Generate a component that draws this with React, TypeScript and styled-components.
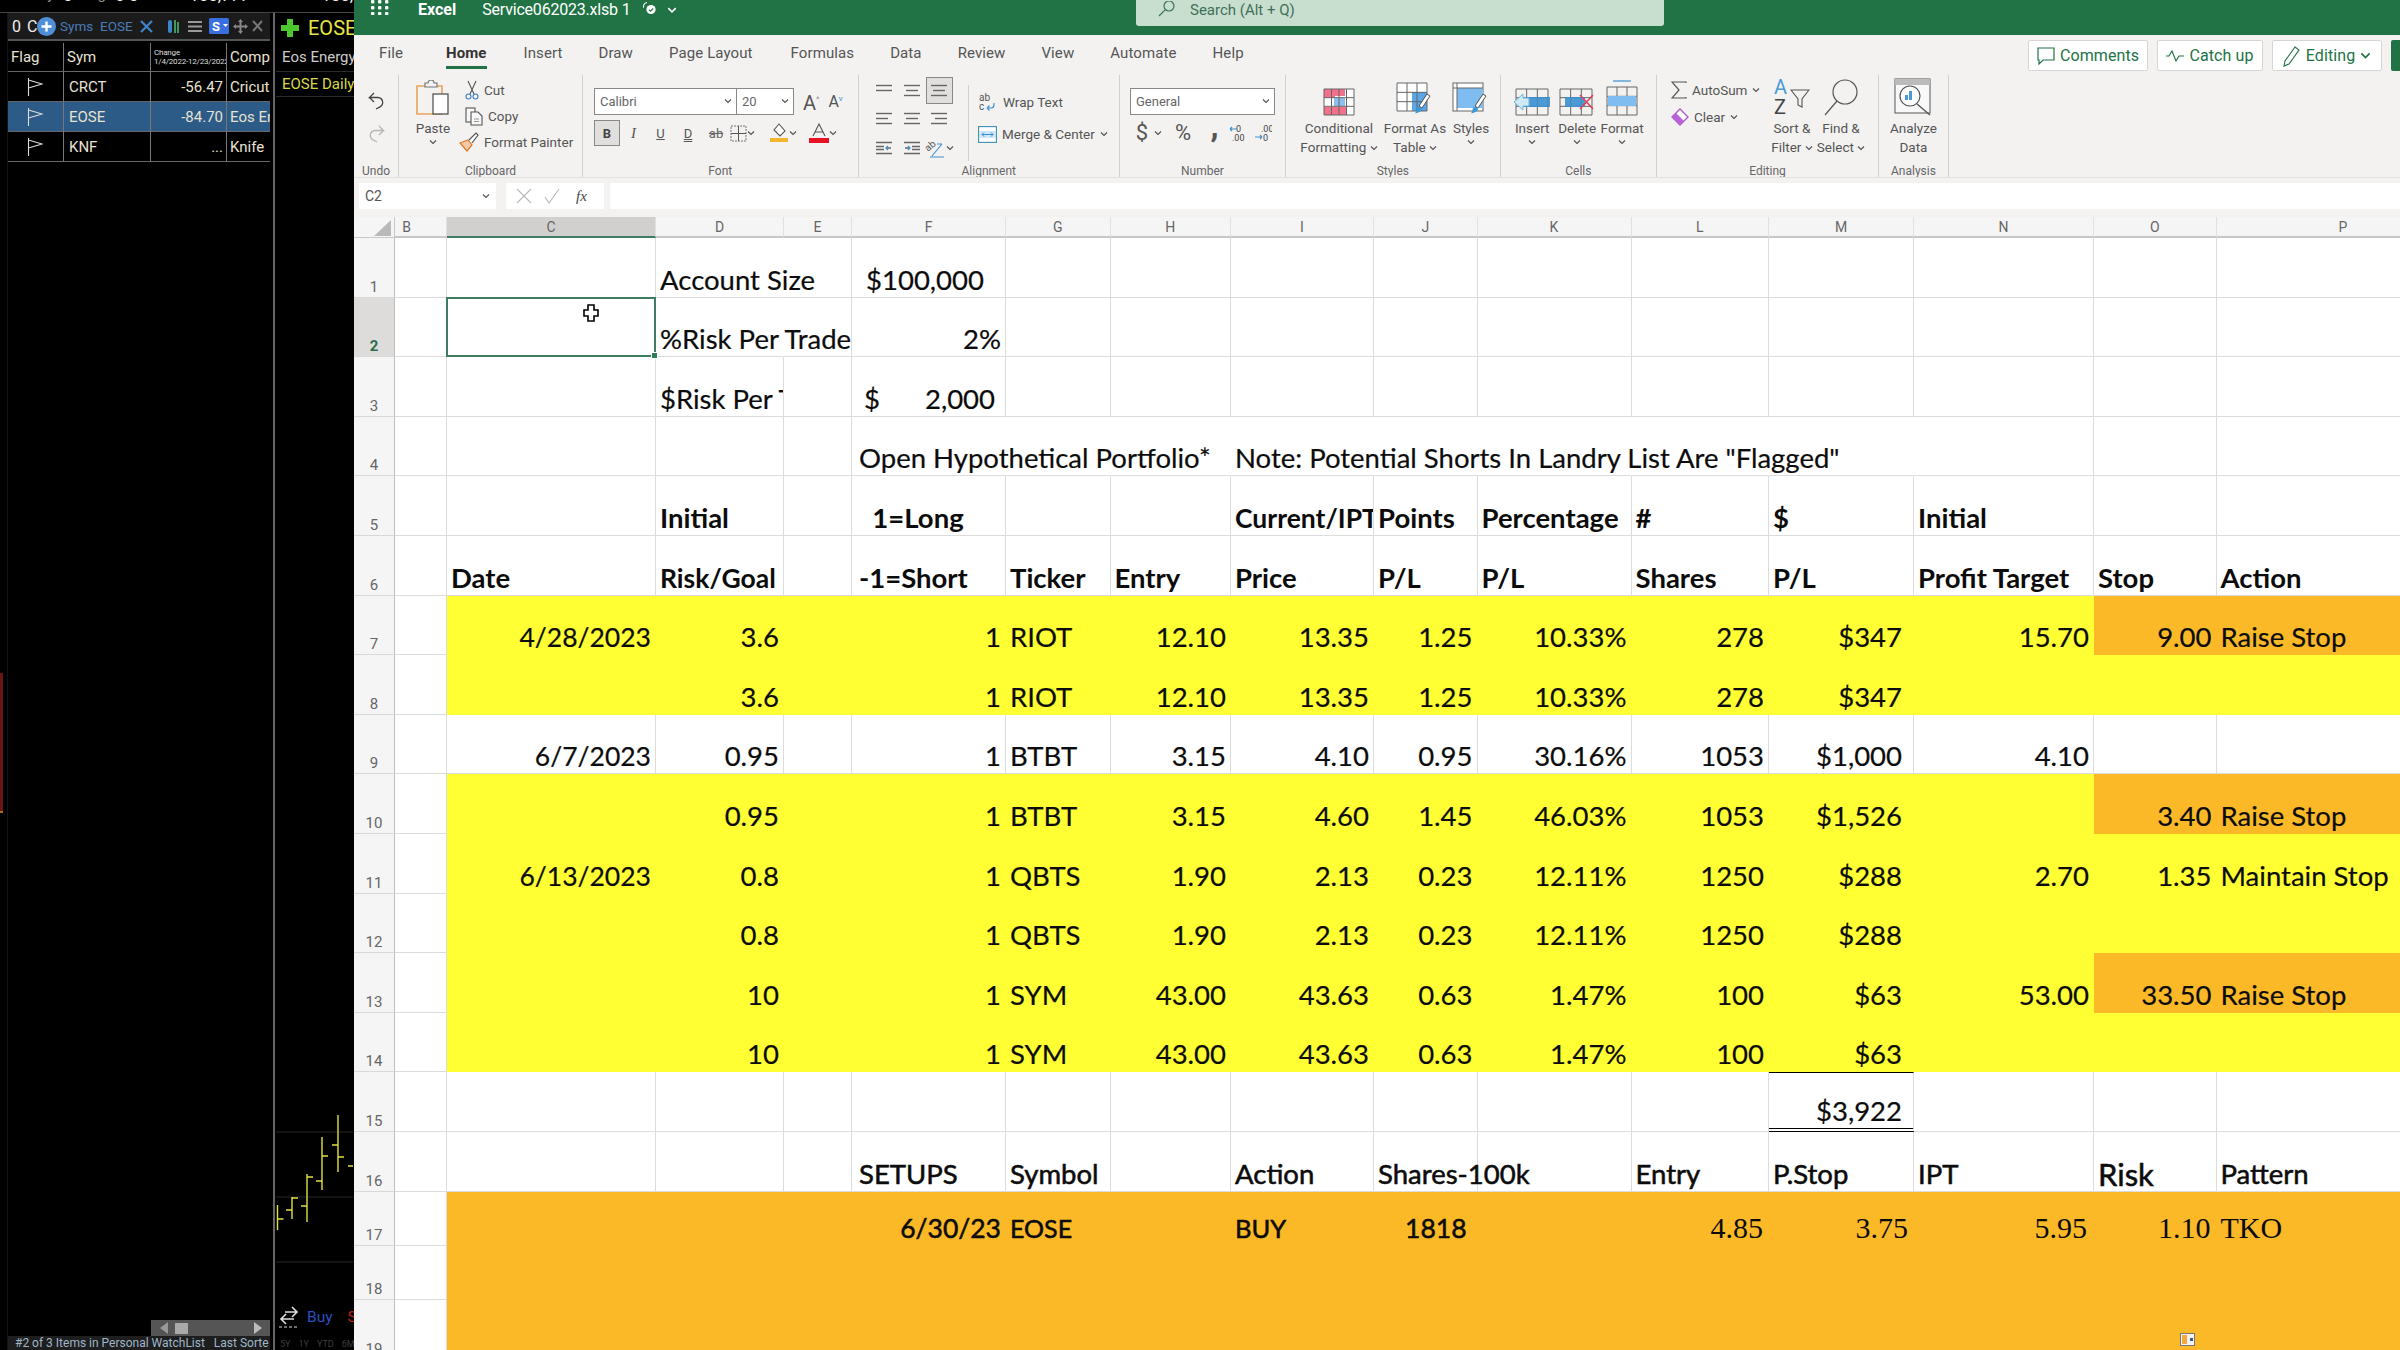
import React from "react";
import styled, { createGlobalStyle } from "styled-components";

const UI = `"Roboto", "Liberation Sans", sans-serif`;
const SHEET = `"Lato", "Liberation Sans", sans-serif`;
const GREEN = "#217346";
const YELLOW = "#ffff33";
const ORANGE = "#fbb827";

const Global = createGlobalStyle`
  html, body { margin: 0; padding: 0; background: #000; }
  * { box-sizing: border-box; }
  svg { flex: none; }
`;

const Page = styled.div`
  display: flex;
  width: 2400px;
  height: 1350px;
  overflow: hidden;
  font-family: ${UI};
`;
const Gap = styled.span<{ $w: number }>`
  width: ${({ $w }) => $w}px;
  flex: none;
`;

/* ---------- trading platform on the left ---------- */

const Platform = styled.div`
  display: flex;
  flex-direction: column;
  width: 354px;
  flex: none;
  background: #000;
  color: #ddd;
  overflow: hidden;
`;
const StatusStrip = styled.div`
  display: flex;
  align-items: flex-end;
  gap: 9px;
  height: 13px;
  padding: 0 0 7px 15px;
  overflow: hidden;
  border-bottom: 1px solid #444;
  font-size: 14.5px;
  line-height: 20px;
  white-space: nowrap;
  color: #999;
  b { color: #eee; font-weight: 400; font-size: 17px; }
`;
const PlatformBody = styled.div`
  display: flex;
  flex: 1;
  min-height: 0;
`;
const EdgeStrip = styled.div`
  width: 8px;
  flex: none;
  padding-top: 660px;
  border-right: 1px solid #10131c;
`;
const EdgeMark = styled.div`
  width: 3px;
  height: 140px;
  background: #6b1414;
  border-bottom: 2px solid #a8701a;
`;
const WatchPane = styled.div`
  display: flex;
  flex-direction: column;
  width: 262px;
  flex: none;
`;
const WatchToolbar = styled.div`
  display: flex;
  align-items: center;
  height: 28px;
  padding-left: 4px;
  background: #1b1b1b;
  font-size: 16px;
  border-bottom: 2px solid #555;
  white-space: nowrap;
`;
const Zeroes = styled.span`
  color: #eee;
  letter-spacing: 1px;
  width: 25px;
`;
const SymsLabel = styled.span<{ $w: number; $ml?: number }>`
  color: #4a7cb8;
  font-size: 13.5px;
  width: ${({ $w }) => $w}px;
  margin-left: ${({ $ml }) => $ml ?? 0}px;
`;
const ToolSvg = styled.svg<{ $mr?: number }>`
  margin-right: ${({ $mr }) => $mr ?? 0}px;
`;
const WatchGrid = styled.div`
  display: grid;
  grid-template-columns: 56px 87px 76px 43px;
  grid-template-rows: 29px 30px 30px 30px;
  margin-top: 2px;
`;
const WatchCell = styled.div<{ $right?: boolean; $sel?: boolean; $last?: boolean; $indent?: number }>`
  display: flex;
  align-items: center;
  justify-content: ${({ $right }) => ($right ? "flex-end" : "flex-start")};
  padding: 0 3px 0 ${({ $indent }) => $indent ?? 3}px;
  overflow: hidden;
  white-space: nowrap;
  font-size: 15px;
  color: #e8e2d2;
  background: ${({ $sel }) => ($sel ? "#2b5b86" : "transparent")};
  border-bottom: 1px solid #666;
  border-right: ${({ $last }) => ($last ? "none" : "1px solid #777")};
`;
const ChangeHead = styled.div`
  font-size: 8px;
  line-height: 9px;
  color: #ddd;
  letter-spacing: -0.2px;
`;
const Spacer = styled.div`
  flex: 1;
`;
const HScroll = styled.div`
  display: flex;
  align-items: center;
  justify-content: space-between;
  width: 119px;
  height: 16px;
  margin-left: 143px;
  padding: 0 8px 0 9px;
  background: #555;
`;
const ScrollThumb = styled.div`
  width: 13px;
  height: 11px;
  margin-right: 60px;
  background: #aaa;
`;
const WatchStatus = styled.div`
  height: 14px;
  padding-left: 7px;
  background: #1e1e1e;
  color: #9fb6c9;
  font-size: 12px;
  line-height: 15px;
  white-space: nowrap;
  overflow: hidden;
`;
const PaneDivider = styled.div`
  width: 2px;
  margin-left: 3px;
  flex: none;
  background: #666;
`;
const ChartPane = styled.div`
  display: flex;
  flex-direction: column;
  flex: 1;
  min-width: 0;
  overflow: hidden;
  margin-left: 1px;
  white-space: nowrap;
`;
const ChartHead = styled.div`
  display: flex;
  align-items: center;
  gap: 9px;
  height: 30px;
  padding-left: 5px;
  color: #e6e645;
  font-size: 20px;
`;
const ChartInfo = styled.div<{ $tone: string; $h: number }>`
  height: ${({ $h }) => $h}px;
  padding-left: 6px;
  color: ${({ $tone }) => $tone};
  font-size: 15px;
  line-height: ${({ $h }) => $h}px;
  border-bottom: 1px solid #2c2c2c;
`;
const ChartSvg = styled.svg`
  display: block;
`;
const TradeRow = styled.div`
  display: flex;
  align-items: center;
  gap: 8px;
  height: 26px;
  margin-top: 39px;
  padding-left: 3px;
  font-size: 15.5px;
`;
const BuyText = styled.span`
  color: #2a50c0;
`;
const SellText = styled.span`
  color: #c0201c;
  margin-left: 7px;
`;
const RangeRow = styled.div`
  display: flex;
  gap: 8px;
  height: 20px;
  padding: 7px 0 0 4px;
  color: #3c3c3c;
  font-size: 9px;
  line-height: 14px;
`;

/* ---------- excel ---------- */

const Excel = styled.div`
  display: flex;
  flex-direction: column;
  flex: 1;
  min-width: 0;
  background: #fff;
`;
const TitleBar = styled.div`
  display: flex;
  height: 35px;
  padding-left: 17px;
  background: ${GREEN};
  color: #fff;
  flex: none;
`;
const TitleLeft = styled.div`
  display: flex;
  align-items: flex-start;
  width: 765px;
  flex: none;
  font-size: 16px;
  line-height: 20px;
`;
const AppName = styled.span`
  font-weight: 700;
  margin-left: 29px;
`;
const FileName = styled.span`
  margin-left: 26px;
  margin-right: 11px;
  letter-spacing: -0.2px;
`;
const TitleChev = styled.span`
  margin-left: 9px;
`;
const SearchBox = styled.div`
  display: flex;
  align-items: flex-start;
  gap: 13px;
  width: 528px;
  height: 26px;
  padding: 1px 0 0 21px;
  background: #c8dfcf;
  border-radius: 0 0 3px 3px;
  color: #3f6f57;
  font-size: 15px;
  line-height: 18px;
`;
const TabBar = styled.div`
  display: flex;
  align-items: flex-start;
  height: 40px;
  padding: 9px 18px 0 25px;
  background: #f3f2f1;
  font-size: 15px;
  letter-spacing: 0.1px;
  color: #444;
  flex: none;
`;
const Tab = styled.div<{ $active?: boolean; $gap: number }>`
  height: 25px;
  margin-right: ${({ $gap }) => $gap}px;
  font-weight: ${({ $active }) => ($active ? 700 : 400)};
  color: ${({ $active }) => ($active ? "#333" : "#555")};
  border-bottom: ${({ $active }) => ($active ? `3px solid ${GREEN}` : "none")};
`;
const TabActions = styled.div`
  display: flex;
  gap: 9px;
  margin: -4px -18px 0 auto;
`;
const ActionButton = styled.div<{ $w: number }>`
  display: flex;
  align-items: center;
  justify-content: center;
  gap: 5px;
  width: ${({ $w }) => $w}px;
  height: 31px;
  background: #fff;
  border: 1px solid #d6d5d3;
  border-radius: 2px;
  color: ${GREEN};
  font-size: 16px;
`;
const ShareStub = styled.div`
  width: 9px;
  height: 31px;
  background: ${GREEN};
  border-radius: 2px 0 0 2px;
`;
const Ribbon = styled.div`
  display: flex;
  height: 102px;
  background: #f3f2f1;
  color: #555;
  font-size: 13px;
  flex: none;
`;
const Group = styled.div<{ $w: number }>`
  display: flex;
  flex-direction: column;
  width: ${({ $w }) => $w}px;
  flex: none;
  padding-top: 3px;
  border-right: 1px solid #d2d0ce;
`;
const GroupBody = styled.div<{ $pad?: number; $gap?: number }>`
  display: flex;
  flex: 1;
  min-height: 0;
  padding-left: ${({ $pad }) => $pad ?? 0}px;
  gap: ${({ $gap }) => $gap ?? 0}px;
`;
const GroupLabel = styled.div`
  height: 13px;
  text-align: center;
  font-size: 12px;
  line-height: 15px;
  color: #666;
`;
const UndoStack = styled.div`
  display: flex;
  flex-direction: column;
  align-items: center;
  gap: 14px;
  width: 100%;
  padding-top: 13px;
`;
const BigButton = styled.div<{ $w: number }>`
  display: flex;
  flex-direction: column;
  align-items: center;
  width: ${({ $w }) => $w}px;
  flex: none;
  line-height: 19px;
  font-size: 13.5px;
  white-space: nowrap;
  color: #555;
`;
const BigIcon = styled.div`
  display: flex;
  align-items: flex-end;
  justify-content: center;
  height: 40px;
  padding-bottom: 2px;
  margin-bottom: 1px;
`;
const SmallList = styled.div<{ $gap: number; $top: number; $w?: number }>`
  display: flex;
  flex-direction: column;
  gap: ${({ $gap }) => $gap}px;
  padding-top: ${({ $top }) => $top}px;
  width: ${({ $w }) => ($w ? `${$w}px` : "auto")};
`;
const SmallItem = styled.div<{ $shift?: number }>`
  display: flex;
  align-items: center;
  gap: 5px;
  height: 20px;
  margin-left: ${({ $shift }) => $shift ?? 0}px;
  white-space: nowrap;
  font-size: 13.5px;
`;
const StackedRows = styled.div`
  display: flex;
  flex-direction: column;
  gap: 6px;
  padding-top: 10px;
`;
const Row = styled.div<{ $gap?: number }>`
  display: flex;
  align-items: center;
  gap: ${({ $gap }) => $gap ?? 0}px;
  height: 26px;
`;
const Combo = styled.div<{ $w: number; $split?: boolean }>`
  display: flex;
  align-items: center;
  justify-content: space-between;
  width: ${({ $w }) => $w}px;
  height: 27px;
  padding: 0 4px 0 5px;
  background: #fff;
  border: 1px solid #8a8886;
  border-right: ${({ $split }) => ($split ? "none" : "1px solid #8a8886")};
  color: #666;
  font-size: 13px;
`;
const GrowA = styled.span<{ $size: number }>`
  font-size: ${({ $size }) => $size}px;
  line-height: 20px;
  color: #555;
`;
const Caret = styled.sup<{ $tone: string }>`
  font-size: 8px;
  color: ${({ $tone }) => $tone};
`;
const ToggleBox = styled.div`
  display: flex;
  align-items: center;
  justify-content: center;
  width: 26px;
  height: 26px;
  background: #e1dfdd;
  border: 1px solid #8a8886;
  font-weight: 700;
  font-size: 13px;
  color: #444;
`;
const FontFlag = styled.span<{ $under?: number; $italic?: boolean; $w: number }>`
  width: ${({ $w }) => $w}px;
  text-align: center;
  font-family: ${({ $italic }) => ($italic ? `"Liberation Serif", serif` : "inherit")};
  font-style: ${({ $italic }) => ($italic ? "italic" : "normal")};
  font-size: ${({ $italic }) => ($italic ? 15 : 13)}px;
  color: #555;
  text-decoration: ${({ $under }) => ($under === 2 ? "underline double" : $under === 1 ? "underline" : "none")};
`;
const StrikeText = styled.span`
  width: 28px;
  text-align: center;
  text-decoration: line-through;
  color: #666;
  font-size: 13px;
`;
const AlignGrid = styled.div`
  display: grid;
  grid-template-columns: repeat(3, 27.5px);
  grid-template-rows: 27px 30px 28px;
  align-items: center;
  justify-items: center;
  padding-left: 12px;
  margin-top: -1px;
`;
const AlignCell = styled.div<{ $on?: boolean }>`
  display: flex;
  align-items: center;
  justify-content: center;
  width: 27px;
  height: 27px;
  background: ${({ $on }) => ($on ? "#e1dfdd" : "transparent")};
  border: ${({ $on }) => ($on ? "1px solid #8a8886" : "none")};
`;
const InnerRule = styled.div`
  width: 1px;
  height: 76px;
  margin: 7px 9px 0 15px;
  background: #d2d0ce;
`;
const NumGlyph = styled.span<{ $size: number; $w: number; $raise?: boolean }>`
  width: ${({ $w }) => $w}px;
  text-align: center;
  font-size: ${({ $size }) => $size}px;
  font-weight: ${({ $raise }) => ($raise ? 900 : 400)};
  line-height: 26px;
  margin-top: ${({ $raise }) => ($raise ? -12 : 0)}px;
  color: #555;
`;
const SortGlyphs = styled.span`
  position: absolute;
  left: 0;
  top: -3px;
  font-size: 20px;
  line-height: 20px;
  color: #444;
  span { color: #4a9ad4; display: block; }
`;
const SortIcon = styled.div`
  position: relative;
  width: 36px;
  height: 36px;
  display: flex;
  justify-content: flex-end;
  padding-top: 9px;
`;
const FormulaBar = styled.div`
  display: flex;
  gap: 6px;
  height: 40px;
  padding: 5px 0 0 5px;
  background: #f3f2f1;
  border-top: 1px solid #e3e2e0;
  flex: none;
`;
const NameBox = styled.div`
  display: flex;
  align-items: center;
  justify-content: space-between;
  width: 137px;
  height: 26px;
  padding: 0 6px;
  background: #fff;
  font-size: 14px;
  color: #555;
  margin-right: 4px;
`;
const FxBox = styled.div`
  display: flex;
  align-items: center;
  gap: 12px;
  width: 98px;
  height: 26px;
  padding-left: 10px;
  background: #fff;
`;
const FxMark = styled.span`
  margin-left: 4px;
  font-family: "Liberation Serif", serif;
  font-style: italic;
  font-size: 15px;
  color: #444;
`;
const FormulaInput = styled.div`
  flex: 1;
  height: 26px;
  background: #fff;
`;

/* ---------- the grid ---------- */

const Sheet = styled.div`
  position: relative;
  display: grid;
  grid-template-columns: 41px 52px 209px 128px 68px 154px 104.5px 120.5px 143px 103.5px 154px 137.5px 145px 180px 122.5px 254px;
  grid-template-rows: 21px repeat(16, 59.6px) 54px 54px 60px;
  flex: 1;
  min-height: 0;
  overflow: hidden;
  font-family: ${SHEET};
  font-size: 27.5px;
  color: #0c0c0c;
`;
const Corner = styled.div`
  display: flex;
  align-items: flex-end;
  justify-content: flex-end;
  padding: 0 3px 1px 0;
  background: #f5f5f5;
  border-right: 1px solid #c8c8c8;
  border-bottom: 1px solid #c8c8c8;
`;
const ColHead = styled.div<{ $active?: boolean; $inset?: boolean }>`
  display: flex;
  align-items: center;
  justify-content: center;
  padding-right: ${({ $inset }) => ($inset ? 28 : 0)}px;
  font-family: ${UI};
  font-size: 14px;
  color: #666;
  background: ${({ $active }) => ($active ? "#d2d0ce" : "#f5f5f5")};
  border-right: 1px solid #e1e1e1;
  border-bottom: ${({ $active }) => ($active ? "2px solid #3f7d62" : "2px solid #c8c8c8")};
`;
const RowHead = styled.div<{ $active?: boolean }>`
  display: flex;
  align-items: flex-end;
  justify-content: center;
  font-family: ${UI};
  font-size: 15px;
  line-height: 20px;
  color: ${({ $active }) => ($active ? "#2f6b50" : "#666")};
  font-weight: ${({ $active }) => ($active ? 700 : 400)};
  background: ${({ $active }) => ($active ? "#dedcda" : "#f5f5f5")};
  border-right: 1px solid #bdbdbd;
  border-bottom: 1px solid #d8d8d8;
`;
const Cell = styled.div<{
  $align?: string;
  $bold?: boolean;
  $medium?: boolean;
  $fill?: string;
  $noRight?: boolean;
  $clip?: boolean;
  $serif?: boolean;
  $size?: number;
  $total?: boolean;
  $accounting?: boolean;
  $padRight?: number;
  $padLeft?: number;
}>`
  position: relative;
  display: flex;
  align-items: flex-end;
  justify-content: ${({ $align, $accounting }) =>
    $accounting ? "space-between" : $align === "r" ? "flex-end" : "flex-start"};
  padding: ${({ $align, $accounting, $padRight, $padLeft }) =>
    $accounting ? "0 10px 0 12px" : $align === "r" ? `0 ${$padRight ?? 4}px 0 0` : `0 0 0 ${$padLeft ?? 4}px`};
  white-space: nowrap;
  line-height: 34px;
  overflow: ${({ $clip }) => ($clip ? "hidden" : "visible")};
  font-weight: ${({ $bold }) => ($bold ? 700 : 400)};
  -webkit-text-stroke: ${({ $bold, $medium, $serif }) =>
    $bold || $serif ? "0" : $medium ? "0.55px" : "0.2px"};
  font-family: ${({ $serif }) => ($serif ? `"Liberation Serif", serif` : "inherit")};
  font-size: ${({ $size, $serif }) => ($size ? `${$size}px` : $serif ? "30px" : "inherit")};
  background: ${({ $fill }) => $fill ?? "transparent"};
  border-right: 1px solid ${({ $fill, $noRight }) => ($fill || $noRight ? "transparent" : "#dcdcdc")};
  border-bottom: 1px solid ${({ $fill }) => ($fill ? "transparent" : "#dcdcdc")};
  ${({ $total }) => ($total ? "border-top: 1px solid #000; border-bottom: 4px double #000;" : "")}
`;
const Selection = styled.div`
  position: absolute;
  inset: -1px;
  z-index: 2;
  border: 2px solid #3f7d62;
`;
const FillHandle = styled.div`
  position: absolute;
  right: -4px;
  bottom: -4px;
  width: 7px;
  height: 7px;
  background: #2f7d57;
  border: 1px solid #fff;
`;
const CursorMark = styled.svg`
  position: absolute;
  left: 135px;
  top: 5px;
`;
const PasteHint = styled.svg`
  position: absolute;
  right: 205px;
  bottom: 4px;
`;

/* ---------- icons ---------- */

const Chev = ({ color = "#555", size = 8 }: { color?: string; size?: number }) => (
  <svg width={size} height={size} viewBox="0 0 8 8" fill="none">
    <path d="M1 2.5 4 5.5 7 2.5" stroke={color} strokeWidth="1.2" />
  </svg>
);

const Waffle = () => (
  <svg width="18" height="15" viewBox="0 0 18 15" fill="#fff">
    {[0, 7, 14].map((x) => [1, 7, 13].map((y) => <rect key={`${x}${y}`} x={x} y={y - 1} width="3.4" height="3.4" rx="1" />))}
  </svg>
);

const CloudCheck = () => (
  <svg width="17" height="16" viewBox="0 0 17 16" fill="none">
    <path d="M6 2.5C3.5 3 2 5 2.6 7.6" stroke="#fff" strokeWidth="1.1" />
    <circle cx="10" cy="9.5" r="4.6" fill="#fff" />
    <path d="M8 9.6l1.5 1.5 2.6-2.8" stroke={GREEN} strokeWidth="1.2" />
  </svg>
);

const SearchGlass = () => (
  <svg width="20" height="17" viewBox="0 0 20 17" fill="none" stroke="#3f6f57" strokeWidth="1.2">
    <circle cx="12" cy="5" r="5" />
    <path d="M8.4 8.6 2 15" />
  </svg>
);

const UndoIcon = ({ tone }: { tone: string }) => (
  <svg width="19" height="19" viewBox="0 0 19 19" fill="none" stroke={tone} strokeWidth="1.3">
    <path d="M7 2 2.5 6.5H11a5 5 0 0 1 2 9.4L9 18" />
    <path d="M2.5 6.5 7 11" />
  </svg>
);

const RedoIcon = ({ tone }: { tone: string }) => (
  <svg width="19" height="19" viewBox="0 0 19 19" fill="none" stroke={tone} strokeWidth="1.3">
    <path d="M12 2l4.5 4.5H8a5 5 0 0 0-2 9.4L10 18" />
    <path d="M16.5 6.5 12 11" />
  </svg>
);

const PasteIcon = () => (
  <svg width="34" height="36" viewBox="0 0 34 36" fill="none">
    <path d="M4 6h22v28H1V6z" fill="#f3f2f1" stroke="#e8a25c" strokeWidth="1.6" />
    <path d="M9 7V3h3a3 3 0 0 1 6 0h3v4z" fill="#f3f2f1" stroke="#777" strokeWidth="1.2" />
    <rect x="17" y="14" width="15" height="20" fill="#fff" stroke="#555" strokeWidth="1.3" />
  </svg>
);

const ScissorsIcon = () => (
  <svg width="14" height="20" viewBox="0 0 14 20" fill="none" stroke="#555" strokeWidth="1.1">
    <path d="M3 1l6 13M11 1 5 14" />
    <circle cx="3.5" cy="16.5" r="2.5" stroke="#3a7fc0" />
    <circle cx="10.5" cy="16.5" r="2.5" stroke="#3a7fc0" />
  </svg>
);

const CopyIcon = () => (
  <svg width="18" height="19" viewBox="0 0 18 19" fill="#f8f8f8" stroke="#555" strokeWidth="1.1">
    <rect x="1" y="1" width="9" height="14" />
    <path d="M6 5h7l4 4v9H6z" />
    <path d="M9 12h5M9 14.5h5" stroke="#999" />
  </svg>
);

const PainterIcon = () => (
  <svg width="20" height="20" viewBox="0 0 20 20" fill="none">
    <path d="M1 11l8-3 4 5-5 6z" fill="#f6c9a6" stroke="#d9792b" strokeWidth="1.2" />
    <path d="M10 8l7-7 2 2-6 8" fill="#fff" stroke="#555" strokeWidth="1.2" />
  </svg>
);

const BordersIcon = () => (
  <svg width="17" height="17" viewBox="0 0 17 17" fill="none" stroke="#777" strokeWidth="1">
    <rect x="1" y="1" width="15" height="15" strokeDasharray="2 1" />
    <path d="M8.5 1v15M1 8.5h15" stroke="#555" />
  </svg>
);

const FillIcon = () => (
  <svg width="19" height="20" viewBox="0 0 19 20" fill="none">
    <path d="M9 1l6 7-5 5-6-6z" fill="#fff" stroke="#555" strokeWidth="1.1" />
    <rect y="15" width="18" height="4" fill="#f1b62d" />
  </svg>
);

const FontColorIcon = () => (
  <svg width="20" height="20" viewBox="0 0 20 20" fill="none">
    <path d="M4 13 10 1l6 12M6.5 9h7" stroke="#555" strokeWidth="1.1" />
    <rect y="15" width="20" height="5" fill="#e81123" />
  </svg>
);

const AlignLines = ({ widths, side }: { widths: number[]; side: "l" | "c" | "r" }) => (
  <svg width="18" height="14" viewBox="0 0 18 14" stroke="#666" strokeWidth="1.4">
    {widths.map((w, i) => {
      const x = side === "l" ? 1 : side === "r" ? 17 - w : 9 - w / 2;
      return <path key={i} d={`M${x} ${1.5 + i * 5}h${w}`} />;
    })}
  </svg>
);

const IndentIcon = ({ flip }: { flip?: boolean }) => (
  <svg width="18" height="14" viewBox="0 0 18 14" stroke="#666" strokeWidth="1.3" fill="none">
    <path d="M1 1.5h16M1 12.5h16" />
    {flip ? <path d="M2 7h5M9 5.5h8M9 8.5h8" /> : <path d="M1 5.5h8M1 8.5h8M16 7h-5" />}
    <path d={flip ? "M5 5l2 2-2 2" : "M13 5l-2 2 2 2"} stroke="#3a8fd0" />
  </svg>
);

const OrientIcon = () => (
  <svg width="22" height="22" viewBox="0 0 22 22" fill="none">
    <text x="0" y="12" fontSize="10" fill="#555" transform="rotate(-40 6 8)">ab</text>
    <path d="M8 19 18 7M18 7h-5M6 20h14" stroke="#3a8fd0" strokeWidth="1.1" />
  </svg>
);

const WrapIcon = () => (
  <svg width="20" height="20" viewBox="0 0 20 20" fill="none">
    <text x="1" y="9" fontSize="10" fill="#555">ab</text>
    <text x="1" y="18" fontSize="10" fill="#555">c</text>
    <path d="M9 16h4a3 3 0 0 0 3-3v-2M9 16l2.5-2.5M9 16l2.5 2.5" stroke="#3a8fd0" strokeWidth="1.1" />
  </svg>
);

const MergeIcon = () => (
  <svg width="19" height="17" viewBox="0 0 19 17" fill="none">
    <rect x="0.6" y="0.6" width="17.8" height="15.8" fill="#fff" stroke="#3a8fb0" strokeWidth="1.1" />
    <rect x="1" y="5" width="17" height="7" fill="#cfe6f6" />
    <path d="M4 8.5h11M4 8.5l2-2M4 8.5l2 2M15 8.5l-2-2M15 8.5l-2 2" stroke="#3a8fd0" />
  </svg>
);

const DecimalIcon = ({ more }: { more?: boolean }) => (
  <svg width="17" height="19" viewBox="0 0 17 19" fill="none">
    <text x={more ? 6 : 7} y="8" fontSize="9" fill="#444">{more ? ".00" : "0"}</text>
    <text x={more ? 8 : 3} y="17" fontSize="9" fill="#444">{more ? "0" : ".00"}</text>
    <path d={more ? "M0 13h7M7 13l-2-2M7 13l-2 2" : "M8 5H1M1 5l2-2M1 5l2 2"} stroke="#3a8fd0" strokeWidth="1.1" />
  </svg>
);

const gridLines = (x: number, y: number, w: number, h: number, cols: number, rows: number) => {
  const parts = [`M${x} ${y}h${w}v${h}h-${w}z`];
  for (let c = 1; c < cols; c++) parts.push(`M${x + (c * w) / cols} ${y}v${h}`);
  for (let r = 1; r < rows; r++) parts.push(`M${x} ${y + (r * h) / rows}h${w}`);
  return parts.join("");
};

const CondIcon = () => (
  <svg width="32" height="28" viewBox="0 0 32 28" fill="none">
    <rect x="1" y="1" width="30" height="26" fill="#fff" />
    <path d="M1 1h21v7H12v2H1zM1 19h22v8H1z" fill="#f2708a" />
    <rect x="11" y="10" width="11" height="8" fill="#8cbff0" />
    <path d={gridLines(1, 1, 30, 26, 4, 3)} stroke="#666" strokeWidth="1" />
  </svg>
);

const BrushOver = ({ x, y }: { x: number; y: number }) => (
  <g transform={`translate(${x} ${y})`}>
    <path d="M12 0l3 2-8 12-3-2z" fill="#fff" stroke="#555" />
    <path d="M2 14c2-2 5-1 5 1s-5 5-7 4c2-1 1-3 2-5z" fill="#3a97d8" />
  </g>
);

const TableStyleIcon = () => (
  <svg width="38" height="34" viewBox="0 0 38 34" fill="none">
    <rect x="1" y="1" width="30" height="28" fill="#fff" />
    <rect x="16" y="10" width="15" height="19" fill="#5aa6e6" />
    <path d={gridLines(1, 1, 30, 28, 3, 3)} stroke="#666" />
    <BrushOver x={19} y={12} />
  </svg>
);

const CellStyleIcon = () => (
  <svg width="38" height="34" viewBox="0 0 38 34" fill="none">
    <rect x="1" y="1" width="30" height="28" fill="#fff" stroke="#666" />
    <rect x="5" y="6" width="26" height="20" fill="#7fbcf0" />
    <path d="M1 6h30M5 1v28" stroke="#666" />
    <BrushOver x={19} y={12} />
  </svg>
);

const InsertIcon = () => (
  <svg width="38" height="28" viewBox="0 0 38 28" fill="none">
    <path d={gridLines(3, 1, 32, 26, 3, 3)} stroke="#666" />
    <rect x="11" y="9" width="26" height="10" fill="#3a8fd0" opacity="0.9" />
    <path d="M1 14l9-8v4h6v8h-6v4z" fill="#cfe9f7" stroke="#6fb6dd" />
  </svg>
);

const DeleteIcon = () => (
  <svg width="36" height="28" viewBox="0 0 36 28" fill="none">
    <path d={gridLines(1, 1, 32, 26, 3, 3)} stroke="#666" />
    <rect x="6" y="9" width="20" height="10" fill="#3a8fd0" opacity="0.9" />
    <path d="M21 7l13 14M34 7 21 21" stroke="#e0405a" strokeWidth="1.6" />
  </svg>
);

const FormatCellIcon = () => (
  <svg width="32" height="36" viewBox="0 0 32 36" fill="none">
    <path d="M7 1h18" stroke="#3a8fd0" strokeWidth="1.2" />
    <path d={gridLines(1, 7, 30, 28, 3, 3)} stroke="#666" />
    <rect x="2" y="16" width="28" height="10" fill="#7fbcf0" />
  </svg>
);

const SigmaIcon = () => (
  <svg width="16" height="18" viewBox="0 0 16 18" fill="none" stroke="#555" strokeWidth="1.2">
    <path d="M15 2V1H1l7 8-7 8h14v-1" />
  </svg>
);

const EraserIcon = () => (
  <svg width="18" height="18" viewBox="0 0 18 18" fill="none">
    <path d="M1 9l8-8 8 8-8 8z" fill="#fff" stroke="#a855c8" strokeWidth="1.3" />
    <path d="M1 9l4-4 8 8-4 4z" fill="#b864d8" />
  </svg>
);

const FunnelIcon = () => (
  <svg width="20" height="20" viewBox="0 0 20 20" fill="none" stroke="#555" strokeWidth="1.1">
    <path d="M1 1h18l-7 9v8l-4-2v-6z" />
  </svg>
);

const LensIcon = () => (
  <svg width="36" height="38" viewBox="0 0 36 38" fill="none" stroke="#555" strokeWidth="1.2">
    <circle cx="22" cy="14" r="12" />
    <path d="M14 23 2 37" />
  </svg>
);

const AnalyzeIcon = () => (
  <svg width="38" height="38" viewBox="0 0 38 38" fill="none">
    <rect x="1" y="1" width="35" height="34" fill="#f8f8f8" stroke="#555" />
    <rect x="1" y="1" width="35" height="6" fill="#bbb" />
    <circle cx="16" cy="18" r="10" fill="#fff" stroke="#555" strokeWidth="1.2" />
    <path d="M11 22v-5h3v5zM15 22v-9h3v9z" fill="#4a9ad4" />
    <path d="M23 26l13 11" stroke="#555" strokeWidth="1.4" />
  </svg>
);

const CommentIcon = () => (
  <svg width="18" height="18" viewBox="0 0 18 18" fill="none" stroke={GREEN} strokeWidth="1.2">
    <path d="M1 1h16v12H6l-4 4v-4H1z" />
  </svg>
);

const PulseIcon = () => (
  <svg width="18" height="14" viewBox="0 0 18 14" fill="none" stroke={GREEN} strokeWidth="1.2">
    <path d="M0 7h3l3-5 4 10 3-5h5" />
  </svg>
);

const PencilIcon = () => (
  <svg width="18" height="22" viewBox="0 0 18 22" fill="none" stroke={GREEN} strokeWidth="1.1">
    <path d="M12 2l4 3L6 19l-5 2 1-5z" />
  </svg>
);

const PlusCircle = () => (
  <svg width="19" height="19" viewBox="0 0 19 19">
    <circle cx="9.5" cy="9.5" r="9.5" fill="#4f8fd8" />
    <path d="M9.5 4.5v10M4.5 9.5h10" stroke="#fff" strokeWidth="2.4" />
  </svg>
);

const FlagIcon = () => (
  <svg width="16" height="18" viewBox="0 0 16 18" fill="none" stroke="#ddd" strokeWidth="1.1">
    <path d="M1.5 0v18M1.5 2 15 6 1.5 10" />
  </svg>
);

const ToolIcons = () => (
  <>
    <ToolSvg $mr={13} width="13" height="13" viewBox="0 0 13 13">
      <path d="M1 1l11 11M12 1 1 12" stroke="#3f85c8" strokeWidth="2.2" />
    </ToolSvg>
    <ToolSvg $mr={7} width="15" height="15" viewBox="0 0 15 15">
      <rect x="2" y="1" width="4" height="13" rx="2" fill="#3f85c8" />
      <rect x="8" y="1" width="2" height="13" fill="#3f9a5c" />
      <rect x="11" y="3" width="2" height="11" fill="#3f9a5c" />
    </ToolSvg>
    <ToolSvg $mr={7} width="14" height="13" viewBox="0 0 14 13">
      <path d="M0 2h14M0 6.5h14M0 11h14" stroke="#999" strokeWidth="2" />
    </ToolSvg>
    <ToolSvg $mr={4} width="20" height="16" viewBox="0 0 20 16">
      <rect width="20" height="16" rx="1.5" fill="#3a6fe0" />
      <text x="3" y="13" fontSize="13" fontWeight="700" fill="#fff">S</text>
      <path d="M14 6h5l-2.5 3z" fill="#fff" />
    </ToolSvg>
    <ToolSvg $mr={4} width="15" height="15" viewBox="0 0 15 15">
      <path d="M7.5 0l2.5 3H5zM7.5 15l2.5-3H5zM0 7.5l3-2.5v5zM15 7.5l-3-2.5v5zM6.5 3h2v9h-2zM3 6.5h9v2H3z" fill="#888" />
    </ToolSvg>
    <ToolSvg width="11" height="12" viewBox="0 0 11 12">
      <path d="M1 1l9 10M10 1 1 11" stroke="#777" strokeWidth="2" />
    </ToolSvg>
  </>
);

const GreenPlus = () => (
  <svg width="18" height="18" viewBox="0 0 18 18">
    <path d="M6 0h6v6h6v6h-6v6H6v-6H0V6h6z" fill="#4ec72e" />
  </svg>
);

const SwapArrows = () => (
  <svg width="20" height="22" viewBox="0 0 20 22" fill="none" stroke="#ddd" strokeWidth="1.6">
    <path d="M6 6h12M13 1l5 5-5 5M15 13H2M7 8l-5 5 5 5" />
    <path d="M0 21h20" strokeWidth="1" strokeDasharray="3 2" />
  </svg>
);

const PriceBars = () => (
  <ChartSvg width="77" height="150" viewBox="0 0 77 150" fill="none" stroke="#e0e040" strokeWidth="1.4">
    <path d="M0 17h77M0 82h77M0 147h77" stroke="#262626" strokeWidth="1" />
    <path d="M1.5 90v25M1.5 104h6M16 82v22M10 95h6M16 83h6M31 59v48M25 91h6M31 62h6M46 22v53M40 66h6M46 41h6M62 0v57M56 30h6M62 42h6M72 51h5" />
  </ChartSvg>
);

const PlusCursor = () => (
  <CursorMark width="16" height="18" viewBox="0 0 16 18" fill="#fff" stroke="#000" strokeWidth="1.6">
    <path d="M5 1h6v5h4v6h-4v5H5v-5H1V6h4z" />
  </CursorMark>
);

/* ---------- data ---------- */

type CellDef = {
  t?: React.ReactNode;
  a?: "l" | "r";
  b?: boolean;
  m?: boolean;
  clip?: boolean;
  size?: number;
  serif?: boolean;
  pr?: number;
  accounting?: boolean;
};
type RowDef = {
  fill?: string;
  orange?: string[];
  noRight?: string[];
  cells: Record<string, CellDef>;
};

const COLS = ["B", "C", "D", "E", "F", "G", "H", "I", "J", "K", "L", "M", "N", "O", "P"];

const l = (t: string): CellDef => ({ t });
const r = (t: string): CellDef => ({ t, a: "r" });
const h = (t: string): CellDef => ({ t, b: true });
const m = (t: string): CellDef => ({ t, m: true });

const trade = (
  date: string,
  risk: string,
  ticker: string,
  entry: string,
  price: string,
  pts: string,
  pct: string,
  shares: string,
  pl: string,
  target: string,
  stop: string,
  action: string,
): Record<string, CellDef> => ({
  C: { t: date, a: "r", size: 26.5 },
  D: r(risk),
  F: r("1"),
  G: l(ticker),
  H: r(entry),
  I: r(price),
  J: r(pts),
  K: r(pct),
  L: r(shares),
  M: { t: pl, a: "r", pr: 11 },
  N: r(target),
  O: r(stop),
  P: l(action),
});

const serifL = (t: string): CellDef => ({ t, serif: true });
const serifR = (t: string, pr?: number): CellDef => ({ t, serif: true, a: "r", pr });

const ROWS: RowDef[] = [
  { noRight: ["D"], cells: { D: l("Account Size"), F: { t: <>&nbsp;$100,000</> } } },
  { noRight: ["D"], cells: { D: l("%Risk Per Trade"), F: r("2%") } },
  { cells: { D: { t: "$Risk Per Trade", clip: true }, F: { accounting: true } } },
  {
    noRight: ["F", "G", "H", "I", "J", "K", "L", "M"],
    cells: { F: l("Open Hypothetical Portfolio*"), I: l('Note: Potential Shorts In Landry List Are "Flagged"') },
  },
  {
    cells: {
      D: h("Initial"),
      F: { t: <>&nbsp;&nbsp;1=Long</>, b: true },
      I: { t: "Current/IPT", b: true, clip: true, size: 26.5 },
      J: h("Points"),
      K: h("Percentage"),
      L: h("#"),
      M: h("$"),
      N: h("Initial"),
    },
  },
  {
    cells: {
      C: h("Date"),
      D: { t: "Risk/Goal", b: true, size: 26.5 },
      F: h("-1=Short"),
      G: h("Ticker"),
      H: h("Entry"),
      I: h("Price"),
      J: h("P/L"),
      K: h("P/L"),
      L: h("Shares"),
      M: h("P/L"),
      N: h("Profit Target"),
      O: h("Stop"),
      P: h("Action"),
    },
  },
  { fill: YELLOW, orange: ["O", "P"], cells: trade("4/28/2023", "3.6", "RIOT", "12.10", "13.35", "1.25", "10.33%", "278", "$347", "15.70", "9.00", "Raise Stop") },
  { fill: YELLOW, cells: trade("", "3.6", "RIOT", "12.10", "13.35", "1.25", "10.33%", "278", "$347", "", "", "") },
  { cells: trade("6/7/2023", "0.95", "BTBT", "3.15", "4.10", "0.95", "30.16%", "1053", "$1,000", "4.10", "", "") },
  { fill: YELLOW, orange: ["O", "P"], cells: trade("", "0.95", "BTBT", "3.15", "4.60", "1.45", "46.03%", "1053", "$1,526", "", "3.40", "Raise Stop") },
  { fill: YELLOW, cells: trade("6/13/2023", "0.8", "QBTS", "1.90", "2.13", "0.23", "12.11%", "1250", "$288", "2.70", "1.35", "Maintain Stop") },
  { fill: YELLOW, cells: trade("", "0.8", "QBTS", "1.90", "2.13", "0.23", "12.11%", "1250", "$288", "", "", "") },
  { fill: YELLOW, orange: ["O", "P"], cells: trade("", "10", "SYM", "43.00", "43.63", "0.63", "1.47%", "100", "$63", "53.00", "33.50", "Raise Stop") },
  { fill: YELLOW, cells: trade("", "10", "SYM", "43.00", "43.63", "0.63", "1.47%", "100", "$63", "", "", "") },
  { cells: { M: { t: "$3,922", a: "r", pr: 11 } } },
  {
    cells: {
      F: m("SETUPS"),
      G: m("Symbol"),
      I: m("Action"),
      J: m("Shares-100k"),
      L: m("Entry"),
      M: m("P.Stop"),
      N: m("IPT"),
      O: { t: "Risk", size: 31, m: true },
      P: m("Pattern"),
    },
  },
  {
    fill: ORANGE,
    cells: {
      F: { t: "6/30/23", a: "r", m: true, size: 26.5 },
      G: { t: "EOSE", m: true, size: 25 },
      I: { t: "BUY", m: true, size: 25.5 },
      J: { t: "1818", a: "r", m: true, pr: 10, size: 26.5 },
      L: serifR("4.85", 5),
      M: serifR("3.75", 5),
      N: serifR("5.95", 6),
      O: serifR("1.10", 5),
      P: serifL("TKO"),
    },
  },
  { fill: ORANGE, cells: {} },
  { fill: ORANGE, cells: {} },
];

const renderCell = (row: RowDef, rowIndex: number, col: string) => {
  const def = row.cells[col] ?? {};
  const filled = col !== "B" && !!row.fill;
  const fill = row.orange?.includes(col) ? ORANGE : filled ? row.fill : undefined;
  const selected = rowIndex === 1 && col === "C";
  return (
    <Cell
      key={col}
      $align={def.a}
      $bold={def.b}
      $medium={def.m}
      $clip={def.clip}
      $serif={def.serif}
      $size={def.size}
      $fill={fill}
      $padRight={def.pr}
      $padLeft={col === "F" ? 7 : undefined}
      $total={rowIndex === 14 && col === "M"}
      $accounting={def.accounting}
      $noRight={row.noRight?.includes(col)}
    >
      {def.accounting ? (
        <>
          <span>$</span>
          <span>2,000</span>
        </>
      ) : (
        def.t
      )}
      {selected && (
        <Selection>
          <FillHandle />
          <PlusCursor />
        </Selection>
      )}
    </Cell>
  );
};

const TABS: [string, number][] = [
  ["File", 43],
  ["Home", 37],
  ["Insert", 36],
  ["Draw", 36],
  ["Page Layout", 38],
  ["Formulas", 36],
  ["Data", 36],
  ["Review", 36],
  ["View", 36],
  ["Automate", 36],
  ["Help", 0],
];

const WATCH = [
  { sym: "CRCT", chg: "-56.47", co: "Cricut" },
  { sym: "EOSE", chg: "-84.70", co: "Eos Energy", sel: true },
  { sym: "KNF", chg: "...", co: "Knife" },
];

const App: React.FC = () => (
  <Page>
    <Global />
    <Platform>
      <StatusStrip>
        <span>Today</span>
        <b>0</b>
        <span>Eng</span>
        <b>0 0</b>
        <span>Cash</span>
        <b>100,777</b>
        <span>Acct Val</span>
        <b>100,777</b>
      </StatusStrip>
      <PlatformBody>
        <EdgeStrip>
          <EdgeMark />
        </EdgeStrip>
        <WatchPane>
          <WatchToolbar>
            <Zeroes>0 C</Zeroes>
            <PlusCircle />
            <SymsLabel $w={40} $ml={4}>Syms</SymsLabel>
            <SymsLabel $w={40}>EOSE</SymsLabel>
            <ToolIcons />
          </WatchToolbar>
          <WatchGrid>
            <WatchCell>Flag</WatchCell>
            <WatchCell>Sym</WatchCell>
            <WatchCell>
              <ChangeHead>
                Change
                <br />
                1/4/2022-12/23/2022
              </ChangeHead>
            </WatchCell>
            <WatchCell $last>Comp</WatchCell>
            {WATCH.map((w) => (
              <React.Fragment key={w.sym}>
                <WatchCell $sel={w.sel} $indent={19}>
                  <FlagIcon />
                </WatchCell>
                <WatchCell $sel={w.sel} $indent={5}>{w.sym}</WatchCell>
                <WatchCell $sel={w.sel} $right>{w.chg}</WatchCell>
                <WatchCell $sel={w.sel} $last>{w.co}</WatchCell>
              </React.Fragment>
            ))}
          </WatchGrid>
          <Spacer />
          <HScroll>
            <svg width="9" height="12" viewBox="0 0 9 12"><path d="M8 0v12L0 6z" fill="#999" /></svg>
            <ScrollThumb />
            <svg width="9" height="12" viewBox="0 0 9 12"><path d="M1 0v12l8-6z" fill="#bbb" /></svg>
          </HScroll>
          <WatchStatus>#2 of 3 Items in Personal WatchList&nbsp;&nbsp;&nbsp;Last Sorte</WatchStatus>
        </WatchPane>
        <PaneDivider />
        <ChartPane>
          <ChartHead>
            <GreenPlus />
            EOSE
          </ChartHead>
          <ChartInfo $tone="#ccc" $h={29}>Eos Energy</ChartInfo>
          <ChartInfo $tone="#d8d84a" $h={25}>EOSE Daily</ChartInfo>
          <Spacer />
          <PriceBars />
          <TradeRow>
            <SwapArrows />
            <BuyText>Buy</BuyText>
            <SellText>Sell</SellText>
          </TradeRow>
          <RangeRow>
            <span>5Y</span>
            <span>1Y</span>
            <span>YTD</span>
            <span>6M</span>
          </RangeRow>
        </ChartPane>
      </PlatformBody>
    </Platform>

    <Excel>
      <TitleBar>
        <TitleLeft>
          <Waffle />
          <AppName>Excel</AppName>
          <FileName>Service062023.xlsb 1</FileName>
          <CloudCheck />
          <TitleChev>
            <Chev color="#fff" size={10} />
          </TitleChev>
        </TitleLeft>
        <SearchBox>
          <SearchGlass />
          Search (Alt + Q)
        </SearchBox>
      </TitleBar>

      <TabBar>
        {TABS.map(([name, gap]) => (
          <Tab key={name} $gap={gap} $active={name === "Home"}>
            {name}
          </Tab>
        ))}
        <TabActions>
          <ActionButton $w={120}>
            <CommentIcon />
            Comments
          </ActionButton>
          <ActionButton $w={106}>
            <PulseIcon />
            Catch up
          </ActionButton>
          <ActionButton $w={110}>
            <PencilIcon />
            Editing
            <Chev color={GREEN} size={11} />
          </ActionButton>
          <ShareStub />
        </TabActions>
      </TabBar>

      <Ribbon>
        <Group $w={45}>
          <GroupBody>
            <UndoStack>
              <UndoIcon tone="#444" />
              <RedoIcon tone="#b5b5b5" />
            </UndoStack>
          </GroupBody>
          <GroupLabel>Undo</GroupLabel>
        </Group>

        <Group $w={184}>
          <GroupBody $pad={10} $gap={8}>
            <BigButton $w={48}>
              <BigIcon>
                <PasteIcon />
              </BigIcon>
              Paste
              <Chev />
            </BigButton>
            <SmallList $gap={6} $top={2}>
              <SmallItem><ScissorsIcon />Cut</SmallItem>
              <SmallItem><CopyIcon />Copy</SmallItem>
              <SmallItem $shift={-6}><PainterIcon />Format Painter</SmallItem>
            </SmallList>
          </GroupBody>
          <GroupLabel>Clipboard</GroupLabel>
        </Group>

        <Group $w={275.5}>
          <GroupBody $pad={11}>
            <StackedRows>
              <Row $gap={9}>
                <Row>
                  <Combo $w={142} $split>
                    Calibri
                    <Chev />
                  </Combo>
                  <Combo $w={58}>
                    20
                    <Chev />
                  </Combo>
                </Row>
                <GrowA $size={20}>A<Caret $tone="#777">^</Caret></GrowA>
                <GrowA $size={16}>A<Caret $tone="#3a8fd0">v</Caret></GrowA>
              </Row>
              <Row>
                <ToggleBox>B</ToggleBox>
                <FontFlag $w={27} $italic>I</FontFlag>
                <FontFlag $w={27} $under={1}>U</FontFlag>
                <FontFlag $w={28} $under={2}>D</FontFlag>
                <StrikeText>ab</StrikeText>
                <BordersIcon />
                <Chev />
                <Gap $w={15} />
                <FillIcon />
                <Chev />
                <Gap $w={12} />
                <FontColorIcon />
                <Chev />
              </Row>
            </StackedRows>
          </GroupBody>
          <GroupLabel>Font</GroupLabel>
        </Group>

        <Group $w={261.5}>
          <GroupBody>
            <AlignGrid>
              <AlignCell><AlignLines widths={[16, 16, 0]} side="l" /></AlignCell>
              <AlignCell><AlignLines widths={[16, 12, 16]} side="c" /></AlignCell>
              <AlignCell $on><AlignLines widths={[16, 12, 16]} side="c" /></AlignCell>
              <AlignCell><AlignLines widths={[16, 12, 16]} side="l" /></AlignCell>
              <AlignCell><AlignLines widths={[16, 12, 16]} side="c" /></AlignCell>
              <AlignCell><AlignLines widths={[16, 12, 16]} side="r" /></AlignCell>
              <AlignCell><IndentIcon /></AlignCell>
              <AlignCell><IndentIcon flip /></AlignCell>
              <AlignCell><OrientIcon /><Chev /></AlignCell>
            </AlignGrid>
            <InnerRule />
            <SmallList $gap={12} $top={14}>
              <SmallItem><WrapIcon />Wrap Text</SmallItem>
              <SmallItem><MergeIcon />Merge &amp; Center<Chev /></SmallItem>
            </SmallList>
          </GroupBody>
          <GroupLabel>Alignment</GroupLabel>
        </Group>

        <Group $w={166}>
          <GroupBody $pad={10}>
            <StackedRows>
              <Row>
                <Combo $w={145}>
                  General
                  <Chev />
                </Combo>
              </Row>
              <Row>
                <NumGlyph $size={22} $w={24}>$</NumGlyph>
                <Chev />
                <NumGlyph $size={22} $w={42}>%</NumGlyph>
                <NumGlyph $size={30} $w={21} $raise>,</NumGlyph>
                <Gap $w={4} />
                <DecimalIcon />
                <Gap $w={9} />
                <DecimalIcon more />
              </Row>
            </StackedRows>
          </GroupBody>
          <GroupLabel>Number</GroupLabel>
        </Group>

        <Group $w={214.7}>
          <GroupBody $pad={9}>
            <BigButton $w={88}>
              <BigIcon><CondIcon /></BigIcon>
              Conditional
              <span>Formatting <Chev /></span>
            </BigButton>
            <BigButton $w={64}>
              <BigIcon><TableStyleIcon /></BigIcon>
              Format As
              <span>Table <Chev /></span>
            </BigButton>
            <BigButton $w={48}>
              <BigIcon><CellStyleIcon /></BigIcon>
              Styles
              <Chev />
            </BigButton>
          </GroupBody>
          <GroupLabel>Styles</GroupLabel>
        </Group>

        <Group $w={156.3}>
          <GroupBody $pad={9}>
            <BigButton $w={45}>
              <BigIcon><InsertIcon /></BigIcon>
              Insert
              <Chev />
            </BigButton>
            <BigButton $w={45}>
              <BigIcon><DeleteIcon /></BigIcon>
              Delete
              <Chev />
            </BigButton>
            <BigButton $w={45}>
              <BigIcon><FormatCellIcon /></BigIcon>
              Format
              <Chev />
            </BigButton>
          </GroupBody>
          <GroupLabel>Cells</GroupLabel>
        </Group>

        <Group $w={222}>
          <GroupBody $pad={14}>
            <SmallList $gap={7} $top={2} $w={96}>
              <SmallItem><SigmaIcon />AutoSum<Chev /></SmallItem>
              <SmallItem><EraserIcon />Clear<Chev /></SmallItem>
            </SmallList>
            <BigButton $w={50}>
              <BigIcon>
                <SortIcon>
                  <SortGlyphs><span>A</span>Z</SortGlyphs>
                  <FunnelIcon />
                </SortIcon>
              </BigIcon>
              Sort &amp;
              <span>Filter <Chev /></span>
            </BigButton>
            <BigButton $w={48}>
              <BigIcon><LensIcon /></BigIcon>
              Find &amp;
              <span>Select <Chev /></span>
            </BigButton>
          </GroupBody>
          <GroupLabel>Editing</GroupLabel>
        </Group>

        <Group $w={70}>
          <GroupBody>
            <BigButton $w={69}>
              <BigIcon><AnalyzeIcon /></BigIcon>
              Analyze
              <span>Data</span>
            </BigButton>
          </GroupBody>
          <GroupLabel>Analysis</GroupLabel>
        </Group>
      </Ribbon>

      <FormulaBar>
        <NameBox>
          C2
          <Chev />
        </NameBox>
        <FxBox>
          <svg width="16" height="16" viewBox="0 0 16 16" stroke="#bbb" strokeWidth="1.2"><path d="M1 1l14 14M15 1 1 15" /></svg>
          <svg width="16" height="16" viewBox="0 0 16 16" stroke="#bbb" strokeWidth="1.2" fill="none"><path d="M1 9l4 6L15 1" /></svg>
          <FxMark>fx</FxMark>
        </FxBox>
        <FormulaInput />
      </FormulaBar>

      <Sheet>
        <Corner>
          <svg width="17" height="16" viewBox="0 0 17 16"><path d="M17 0v16H0z" fill="#b9b9b9" /></svg>
        </Corner>
        {COLS.map((c) => (
          <ColHead key={c} $active={c === "C"} $inset={c === "B"}>{c}</ColHead>
        ))}
        {ROWS.map((row, i) => (
          <React.Fragment key={i}>
            <RowHead $active={i === 1}>{i + 1}</RowHead>
            {COLS.map((c) => renderCell(row, i, c))}
          </React.Fragment>
        ))}
        <PasteHint width="15" height="13" viewBox="0 0 15 13">
          <rect x="0.5" y="0.5" width="14" height="12" fill="#f3f2f1" stroke="#777" />
          <rect x="2" y="2" width="5" height="9" fill="#f1a93c" />
          <rect x="10" y="5" width="3" height="3" fill="#355c8a" />
        </PasteHint>
      </Sheet>
    </Excel>
  </Page>
);

export default App;
